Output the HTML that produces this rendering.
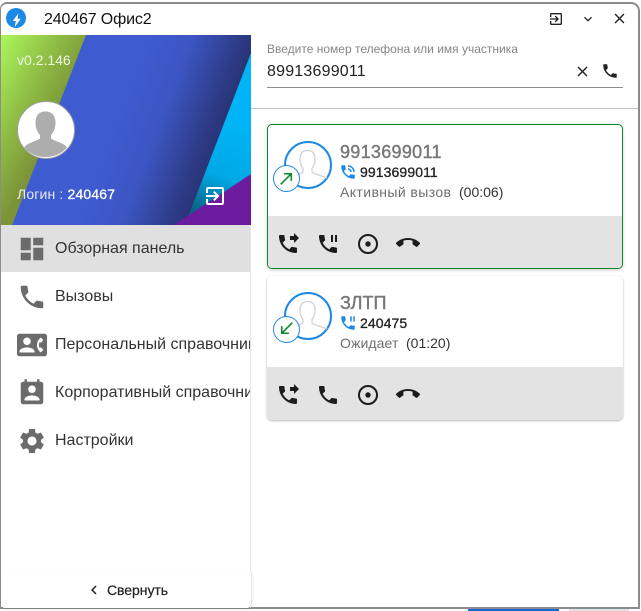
<!DOCTYPE html>
<html><head><meta charset="utf-8">
<style>
html,body{margin:0;padding:0;background:#fff;width:641px;height:611px;overflow:hidden}
body{font-family:"Liberation Sans",sans-serif;position:relative;color:#000}
.a{position:absolute}
.t{position:absolute;white-space:nowrap;line-height:1}
svg{position:absolute;display:block}
.card{position:absolute;left:267px;width:356px;background:#fff;border-radius:5px;box-sizing:border-box;overflow:hidden}
.bar{position:absolute;left:0;right:0;background:#e3e3e3}
</style></head><body>
<svg width="0" height="0" style="position:absolute"><defs>
<path id="ph" d="M6.62 10.79c1.44 2.83 3.76 5.14 6.59 6.59l2.2-2.2c.27-.27.67-.36 1.02-.24 1.12.37 2.33.57 3.57.57.55 0 1 .45 1 1V20c0 .55-.45 1-1 1-9.39 0-17-7.61-17-17 0-.55.45-1 1-1h3.5c.55 0 1 .45 1 1 0 1.25.2 2.45.57 3.57.11.35.03.74-.25 1.02l-2.2 2.2z"/>
<path id="cl" d="M19 6.41L17.59 5 12 10.59 6.41 5 5 6.41 10.59 12 5 17.59 6.41 19 12 13.41 17.59 19 19 17.59 13.41 12z"/>
<path id="ex" d="M10.09 15.59L11.5 17l5-5-5-5-1.41 1.41L12.67 11H3v2h9.67l-2.58 2.59zM19 3H5c-1.11 0-2 .9-2 2v4h2V5h14v14H5v-4H3v4c0 1.1.89 2 2 2h14c1.1 0 2-.9 2-2V5c0-1.1-.9-2-2-2z"/>
<path id="fw" d="M18 11l5-5-5-5v3h-4v4h4v3zm2 4.5c-1.25 0-2.45-.2-3.57-.57-.35-.11-.74-.03-1.02.24l-2.2 2.2c-2.83-1.44-5.15-3.75-6.59-6.59l2.2-2.21c.28-.26.36-.65.25-1C8.7 6.45 8.5 5.25 8.5 4c0-.55-.45-1-1-1H4c-.55 0-1 .45-1 1 0 9.39 7.61 17 17 17 .55 0 1-.45 1-1v-3.5c0-.55-.45-1-1-1z"/>
<path id="pa" d="M17 3h-2v7h2V3zm3 12.5c-1.25 0-2.45-.2-3.57-.57-.35-.11-.74-.03-1.02.24l-2.2 2.2c-2.83-1.44-5.15-3.75-6.59-6.59l2.2-2.21c.28-.26.36-.65.25-1C8.7 6.45 8.5 5.25 8.5 4c0-.55-.45-1-1-1H4c-.55 0-1 .45-1 1 0 9.39 7.61 17 17 17 .55 0 1-.45 1-1v-3.5c0-.55-.45-1-1-1zM19 3v7h2V3h-2z"/>
<g id="rb"><circle cx="12" cy="12" r="2.7"/><circle cx="12" cy="12" r="9" fill="none" stroke="#1c1c1c" stroke-width="2"/></g>
<path id="en" d="M12 9c-1.6 0-3.15.25-4.6.72v3.1c0 .39-.23.74-.56.9-.98.49-1.87 1.12-2.66 1.85-.18.18-.43.28-.7.28-.28 0-.53-.11-.71-.29L.29 13.08c-.18-.17-.29-.42-.29-.7 0-.28.11-.53.29-.71C3.34 8.78 7.46 7 12 7s8.66 1.78 11.71 4.67c.18.18.29.43.29.71 0 .28-.11.53-.29.71l-2.48 2.48c-.18.18-.43.29-.71.29-.27 0-.52-.11-.7-.28-.79-.74-1.69-1.36-2.67-1.85-.33-.16-.56-.5-.56-.9v-3.1C15.15 9.25 13.6 9 12 9z"/>
<path id="tk" d="M20 15.5c-1.25 0-2.45-.2-3.57-.57-.35-.11-.74-.03-1.02.24l-2.2 2.2c-2.83-1.44-5.15-3.75-6.59-6.59l2.2-2.21c.28-.26.36-.65.25-1C8.7 6.45 8.5 5.25 8.5 4c0-.55-.45-1-1-1H4c-.55 0-1 .45-1 1 0 9.39 7.61 17 17 17 .55 0 1-.45 1-1v-3.5c0-.55-.45-1-1-1zM19 12h2c0-4.97-4.03-9-9-9v2c3.87 0 7 3.13 7 7zm-4 0h2c0-2.76-2.24-5-5-5v2c1.66 0 3 1.34 3 3z"/>
<g id="avatar"><path d="M23.500 9.500c5 0 7.500 3 7.500 8.500 0 4-1 7-3 9.500v3.500c3 2.500 10 3.500 15 6M23.500 9.500c-5 0-7.500 3-7.500 8.500 0 4 1 7 3 9.500v3.500c-3 2.500-9 3.500-13 6" fill="none" stroke="#d2d2d2" stroke-width="1.300"/></g>
</defs></svg>

<!-- desk beneath window -->
<div class="a" style="left:468px;top:609px;width:91px;height:2px;background:#1a66d6"></div>
<div class="a" style="left:569px;top:609px;width:60px;height:2px;background:#dfe3ea"></div>

<!-- window frame -->
<div class="a" style="left:0;top:2px;width:640px;height:607px;box-sizing:border-box;border:solid #8c8c8c;border-width:2px 2px 2px 1px;border-radius:7px 9px 0 0;background:#fff"></div>
<div class="a" style="left:6px;top:8px;width:20px;height:20px;border-radius:50%;background:#1e88e5"></div>
<svg style="left:0;top:0" width="40" height="40" viewBox="0 0 40 40" fill="#fff"><path d="M18.300 13.500L12.800 21H15.800L14.800 27L20.800 18.800H17.600Z"/></svg>
<div class="t" style="left:44px;top:12px;font-size:16px;letter-spacing:-.15px;color:#111">240467 Офис2</div>
<svg style="left:548px;top:11px" width="16" height="16" viewBox="0 0 24 24" fill="#222"><use href="#ex"/></svg>
<svg style="left:580px;top:11px" width="16" height="16" viewBox="0 0 24 24" fill="#222"><path d="M16.590 8.590L12 13.170 7.410 8.590 6 10l6 6 6-6z"/></svg>
<svg style="left:611px;top:10px" width="17" height="17" viewBox="0 0 24 24" fill="#222"><use href="#cl"/></svg>

<!-- sidebar image -->
<div class="a" style="left:1px;top:35px;width:250px;height:190px;overflow:hidden">
<svg style="left:0;top:0" width="250" height="190" viewBox="0 0 250 190">
<defs>
<linearGradient id="g1" gradientUnits="userSpaceOnUse" x1="0" y1="10" x2="75" y2="50"><stop offset="0" stop-color="#a9f25a"/><stop offset=".55" stop-color="#8fbd45"/><stop offset="1" stop-color="#7c9438"/></linearGradient>
<linearGradient id="g2" gradientUnits="userSpaceOnUse" x1="120" y1="80" x2="225" y2="120"><stop offset="0" stop-color="#3f5bd0"/><stop offset=".35" stop-color="#3c55c2"/><stop offset=".75" stop-color="#2d3b86"/><stop offset="1" stop-color="#262f6b"/></linearGradient>
<linearGradient id="g3" gradientUnits="userSpaceOnUse" x1="230" y1="90" x2="200" y2="180"><stop offset="0" stop-color="#00b4f5"/><stop offset=".55" stop-color="#00a8e4"/><stop offset="1" stop-color="#0a5f80"/></linearGradient>
</defs>
<rect width="250" height="190" fill="url(#g1)"/>
<path d="M85 0H250V190H11z" fill="url(#g2)"/>
<path d="M250 18V190H184z" fill="url(#g3)"/>
<path d="M250 139V190H173z" fill="#6c1a9e"/>
</svg>
</div>
<div class="t" style="left:17px;top:53px;font-size:14px;color:#eef6e0">v0.2.146</div>
<div class="a" style="left:17px;top:101px;width:58px;height:58px;border-radius:50%;background:#fff;box-sizing:border-box;border:1.500px solid #a0a0a0;overflow:hidden">
<svg style="left:0;top:0" width="55" height="55" viewBox="0 0 55 55"><path d="M27.500 9.500c6.500 0 10 4 10 11 0 5-1.500 9.500-4.500 12.500v3.500c4 3 12.500 4 16 9 -5 6-13 9.500-21.500 9.500s-16.500-3.500-21.500-9.500c3.500-5 12-6 16-9v-3.500c-3-3-4.500-7.500-4.500-12.500 0-7 3.500-11 10-11z" fill="#adadad"/></svg>
</div>
<div class="t" style="left:17px;top:187px;font-size:14px;letter-spacing:.15px;color:#e8eaf8">Логин : <span style="color:#fff;-webkit-text-stroke:.3px #fff">240467</span></div>
<svg style="left:203px;top:184px" width="24" height="24" viewBox="0 0 24 24" fill="#fff"><use href="#ex"/></svg>

<!-- menu -->
<div class="a" style="left:1px;top:225px;width:250px;height:47px;background:#e0e0e0"></div>
<div class="a" style="left:250px;top:225px;width:1px;height:383px;background:#e6e6e6"></div>
<svg style="left:17px;top:234px" width="30" height="30" viewBox="0 0 24 24" fill="#6b6b6b"><path d="M3 13h8V3H3v10zm0 8h8v-6H3v6zm10 0h8V11h-8v10zm0-18v6h8V3h-8z"/></svg>
<svg style="left:17px;top:282px" width="30" height="30" viewBox="0 0 24 24" fill="#6b6b6b"><use href="#ph"/></svg>
<svg style="left:17px;top:330px" width="30" height="30" viewBox="0 0 24 24" fill="#6b6b6b"><path d="M22 3H2C.9 3 0 3.900 0 5v14c0 1.100.9 2 2 2h20c1.100 0 1.990-.9 1.990-2L24 5c0-1.100-.9-2-2-2zM8 6c1.660 0 3 1.340 3 3s-1.340 3-3 3-3-1.340-3-3 1.340-3 3-3zm6 12H2v-1c0-2 4-3.100 6-3.100s6 1.100 6 3.100v1zm3.850-4h1.640L21 16l-1.990 1.990c-1.310-.98-2.280-2.380-2.730-3.990-.18-.64-.28-1.310-.28-2s.1-1.360.28-2c.45-1.620 1.420-3.010 2.730-3.990L21 8l-1.510 2h-1.640c-.22.63-.35 1.300-.35 2s.13 1.370.35 2z"/></svg>
<svg style="left:17px;top:378px" width="30" height="30" viewBox="0 0 24 24" fill="#6b6b6b"><path d="M19 3h-1V1h-2v2H8V1H6v2H5c-1.110 0-2 .9-2 2v14c0 1.100.89 2 2 2h14c1.100 0 2-.9 2-2V5c0-1.100-.9-2-2-2zm-7 3c1.660 0 3 1.340 3 3s-1.340 3-3 3-3-1.340-3-3 1.340-3 3-3zm6 12H6v-1c0-2 4-3.100 6-3.100s6 1.100 6 3.100v1z"/></svg>
<svg style="left:17px;top:426px" width="30" height="30" viewBox="0 0 24 24" fill="#6b6b6b"><path d="M19.140 12.940c.04-.3.06-.61.06-.94 0-.32-.02-.64-.07-.94l2.030-1.580c.18-.14.23-.41.12-.61l-1.920-3.320c-.12-.22-.37-.29-.59-.22l-2.390.96c-.5-.38-1.030-.7-1.620-.94l-.36-2.540c-.04-.24-.24-.41-.48-.41h-3.840c-.24 0-.43.17-.47.41l-.36 2.540c-.59.24-1.130.57-1.620.94l-2.390-.96c-.22-.08-.47 0-.59.22L2.740 8.870c-.12.21-.08.47.12.61l2.030 1.580c-.05.3-.09.63-.09.94s.02.64.07.94l-2.030 1.580c-.18.14-.23.41-.12.61l1.920 3.320c.12.22.37.29.59.22l2.390-.96c.5.38 1.030.7 1.620.94l.36 2.540c.05.24.24.41.48.41h3.840c.24 0 .44-.17.47-.41l.36-2.540c.59-.24 1.130-.56 1.620-.94l2.390.96c.22.08.47 0 .59-.22l1.920-3.320c.12-.22.07-.47-.12-.61l-2.010-1.580zM12 15.600c-1.980 0-3.600-1.620-3.600-3.600s1.620-3.600 3.600-3.600 3.600 1.620 3.600 3.600-1.620 3.600-3.600 3.600z"/></svg>
<div class="a" style="left:55px;top:240px;width:195px;height:220px;overflow:hidden;font-size:16px;color:#333">
<div class="t" style="left:0;top:1px">Обзорная панель</div>
<div class="t" style="left:0;top:49px">Вызовы</div>
<div class="t" style="left:0;top:97px">Персональный справочник</div>
<div class="t" style="left:0;top:145px">Корпоративный справочник</div>
<div class="t" style="left:0;top:193px">Настройки</div>
</div>
<div class="a" style="left:1px;top:571px;width:250px;height:37px;background:#fff;border-radius:0 0 4px 4px;box-shadow:1px 1px 2px rgba(0,0,0,.13)"></div>
<svg style="left:85px;top:581px" width="18" height="18" viewBox="0 0 24 24" fill="#222"><path d="M15.410 7.410L14 6l-6 6 6 6 1.410-1.410L10.830 12z"/></svg>
<div class="t" style="left:107px;top:583px;font-size:14px;color:#222;-webkit-text-stroke:.2px #222;letter-spacing:-.05px">Свернуть</div>

<!-- search -->
<div class="t" style="left:267px;top:43px;font-size:12px;color:#868686">Введите номер телефона или имя участника</div>
<div class="t" style="left:267px;top:64px;font-size:16px;letter-spacing:.2px;color:#222">89913699011</div>
<svg style="left:574px;top:63px" width="17" height="17" viewBox="0 0 24 24" fill="#222"><use href="#cl"/></svg>
<svg style="left:601px;top:62px" width="18" height="18" viewBox="0 0 24 24" fill="#222"><use href="#ph"/></svg>
<div class="a" style="left:267px;top:87px;width:356px;height:1px;background:#8e8e8e"></div>
<div class="a" style="left:251px;top:108px;width:387px;height:1px;background:#c2c2c2"></div>

<!-- card 1 -->
<div class="card" style="top:124px;height:145px;border:1px solid #0a8a2a;box-shadow:0 1px 3px rgba(0,0,0,.2)">
<div class="bar" style="top:91px;bottom:0"></div>
</div>
<div class="a" style="left:284px;top:141px;width:48px;height:48px;border-radius:50%;border:2px solid #1e88e5;box-sizing:border-box;background:#fff"></div>
<svg style="left:284px;top:141px" width="48" height="48" viewBox="0 0 48 48"><use href="#avatar"/></svg>
<div class="a" style="left:273px;top:165px;width:27px;height:27px;border-radius:50%;border:1px solid #1e88e5;box-sizing:border-box;background:#fff"></div>
<svg style="left:277px;top:169px" width="19" height="19" viewBox="0 0 24 24" fill="#0a8a2a"><path d="M9 5v2h6.590L4 18.590 5.410 20 17 8.410V15h2V5z"/></svg>
<div class="t" style="left:340px;top:143px;font-size:18px;letter-spacing:.3px;color:#777;-webkit-text-stroke:.4px #777">9913699011</div>
<svg style="left:339px;top:163px" width="18" height="18" viewBox="0 0 24 24" fill="#1e88e5"><use href="#tk"/></svg>
<div class="t" style="left:360px;top:165px;font-size:14px;letter-spacing:.1px;color:#222;-webkit-text-stroke:.3px #222">9913699011</div>
<div class="t" style="left:340px;top:185px;font-size:14px;letter-spacing:.4px;color:#6f6f6f">Активный вызов</div>
<div class="t" style="left:459px;top:185px;font-size:14px;color:#333">(00:06)</div>
<svg style="left:276px;top:232px" width="24" height="24" viewBox="0 0 24 24" fill="#1c1c1c"><use href="#fw"/></svg>
<svg style="left:316px;top:232px" width="24" height="24" viewBox="0 0 24 24" fill="#1c1c1c"><use href="#pa"/></svg>
<svg style="left:356px;top:232px" width="24" height="24" viewBox="0 0 24 24" fill="#1c1c1c"><use href="#rb"/></svg>
<svg style="left:396px;top:231px" width="24" height="24" viewBox="0 0 24 24" fill="#1c1c1c"><use href="#en"/></svg>

<!-- card 2 -->
<div class="card" style="top:276px;height:144px;box-shadow:0 1px 2px rgba(0,0,0,.28),0 0 1px rgba(0,0,0,.06)">
<div class="bar" style="top:91px;bottom:0"></div>
</div>
<div class="a" style="left:284px;top:292px;width:48px;height:48px;border-radius:50%;border:2px solid #1e88e5;box-sizing:border-box;background:#fff"></div>
<svg style="left:284px;top:292px" width="48" height="48" viewBox="0 0 48 48"><use href="#avatar"/></svg>
<div class="a" style="left:273px;top:316px;width:27px;height:27px;border-radius:50%;border:1px solid #1e88e5;box-sizing:border-box;background:#fff"></div>
<svg style="left:277px;top:319px" width="19" height="19" viewBox="0 0 24 24" fill="#0a8a2a"><path d="M20 5.410L18.590 4 7 15.590V9H5v10h10v-2H8.410z"/></svg>
<div class="t" style="left:340px;top:294px;font-size:18px;color:#777;-webkit-text-stroke:.4px #777">ЗЛТП</div>
<svg style="left:339px;top:314px" width="18" height="18" viewBox="0 0 24 24" fill="#1e88e5"><use href="#pa"/></svg>
<div class="t" style="left:360px;top:316px;font-size:14px;letter-spacing:.1px;color:#222;-webkit-text-stroke:.3px #222">240475</div>
<div class="t" style="left:340px;top:336px;font-size:14px;letter-spacing:.1px;color:#6f6f6f">Ожидает</div>
<div class="t" style="left:406px;top:336px;font-size:14px;color:#333">(01:20)</div>
<svg style="left:276px;top:383px" width="24" height="24" viewBox="0 0 24 24" fill="#1c1c1c"><use href="#fw"/></svg>
<svg style="left:316px;top:383px" width="24" height="24" viewBox="0 0 24 24" fill="#1c1c1c"><use href="#ph"/></svg>
<svg style="left:356px;top:383px" width="24" height="24" viewBox="0 0 24 24" fill="#1c1c1c"><use href="#rb"/></svg>
<svg style="left:396px;top:382px" width="24" height="24" viewBox="0 0 24 24" fill="#1c1c1c"><use href="#en"/></svg>
</body></html>
